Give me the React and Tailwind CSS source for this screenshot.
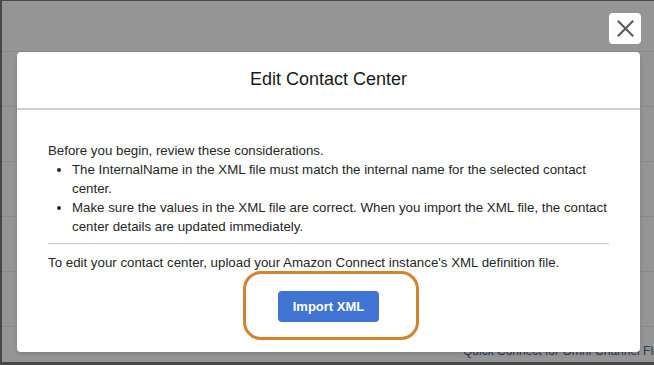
import React from 'react';

const rows = [0, 1, 2, 3, 4, 5, 6];

const App = () => {
  return (
    <div
      className="relative w-[654px] h-[365px] overflow-hidden bg-[#959595] border-l-2 border-t border-b-[3px] border-[#474747]"
      style={{ fontFamily: '"Liberation Sans", Arial, sans-serif' }}
    >
      {/* page behind the overlay */}
      <div className="absolute inset-0 flex flex-col">
        <div className="h-[51px] shrink-0 border-b border-[#8a8a8a]" />
        {rows.map((r) => (
          <div key={r} className="h-[55px] shrink-0 border-b border-[#8a8a8a]" />
        ))}
      </div>
      <div className="absolute left-[461px] top-[343px] text-[12px] leading-[14px] text-[#2b3852] whitespace-nowrap">
        Quick Connect for Omni-Channel Flows
      </div>

      {/* close */}
      <button className="absolute left-[607px] top-[12px] w-[32px] h-[31px] bg-white rounded-[4px] flex items-center justify-center">
        <svg width="17" height="17" viewBox="0 0 16 16" fill="none" stroke="#5b5b5b" strokeWidth="2" strokeLinecap="square">
          <path d="M1.5 1.5 L14.5 14.5 M14.5 1.5 L1.5 14.5" />
        </svg>
      </button>

      {/* modal */}
      <div className="absolute left-[15px] top-[51px] w-[623px] shadow-[0_2px_4px_rgba(0,0,0,0.15)] rounded-[4px]">
        <div className="h-[58px] bg-white rounded-t-[4px] border-b-2 border-[#cfcfcf] flex items-center justify-center">
          <h2 className="text-[18px] text-[#181818] -mt-[2px]">Edit Contact Center</h2>
        </div>
        <div className="bg-white rounded-b-[4px] px-[31px] pt-[31px] pb-[30px] text-[13.3px] leading-[19px] text-[#262626]">
          <p>Before you begin, review these considerations.</p>
          <ul className="list-disc pl-6">
            <li>The InternalName in the XML file must match the internal name for the selected contact center.</li>
            <li>Make sure the values in the XML file are correct. When you import the XML file, the contact center details are updated immediately.</li>
          </ul>
          <div className="mt-[7px] border-t border-[#c9c9c9]" />
          <p className="mt-[9px]">
            To edit your contact center, upload your Amazon Connect instance's XML definition file.
          </p>
          <div className="mt-[19px] flex justify-center">
            <div className="relative">
              <div className="absolute -left-[35px] -right-[40px] -top-[20px] -bottom-[18px] border-[3px] border-[#d5822f] rounded-[18px]" />
              <button className="relative w-[101px] h-[31px] rounded-[4px] bg-[#4074d2] text-white text-[13px] font-bold">
                Import XML
              </button>
            </div>
          </div>
        </div>
      </div>
    </div>
  );
};

export default App;
